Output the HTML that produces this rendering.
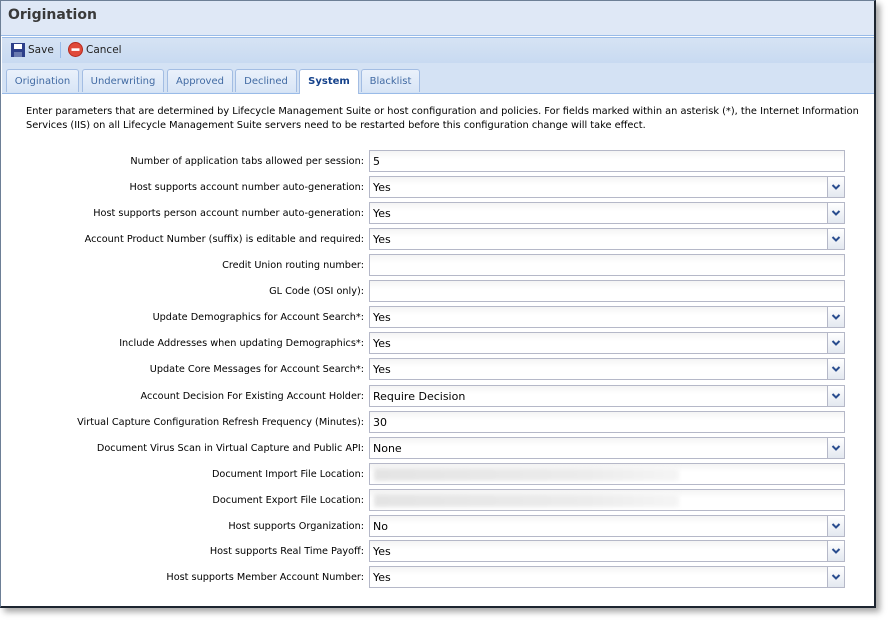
<!DOCTYPE html>
<html><head><style>
body{margin:0;width:890px;height:627px;background:#fff;font-family:"DejaVu Sans","Liberation Sans",sans-serif;position:relative;overflow:hidden}
#win{position:absolute;left:0;top:0;width:873px;height:605px;border:1px solid #6d7f96;border-right:2px solid #1d2530;border-bottom:2px solid #1d2530;background:#fff;box-shadow:4px 4px 6px rgba(0,0,0,.35)}
#title{position:absolute;left:0;top:0;width:873px;height:34px;background:#dfe8f6;border-bottom:1px solid #99bbe8}
#title span{position:absolute;left:7px;top:6px;font:bold 14px "DejaVu Sans",sans-serif;color:#3a3a3a}
#tb{position:absolute;left:1px;top:36px;width:872px;height:25px;background:linear-gradient(#d6e3f4,#c8daf1);border-top:1px solid #99bbe8;font-size:10.5px;color:#222}
#tabs{position:absolute;left:1px;top:62px;width:872px;height:30px;background:#d4e2f4;border-bottom:1px solid #99bbe8}
.tab{position:absolute;top:6px;height:22px;border:1px solid #a3bde3;border-bottom:none;border-radius:3px 3px 0 0;background:linear-gradient(#eaf1fb,#d8e5f6);font-size:10px;color:#416aa3;text-align:center;line-height:23px}
.tab.on{background:#fff;height:24px;color:#15428b;font-weight:bold}
#desc{position:absolute;left:25px;top:104px;width:840px;font-size:9.8px;line-height:14px;color:#000}
.lbl{position:absolute;right:526px;font-size:9.7px;color:#000;white-space:nowrap;margin-top:2px}
.f{position:absolute;left:369px;width:476px;height:22px;border:1px solid #b5b8c8;background:linear-gradient(#f4f4f4,#fff 40%);font-size:11px;line-height:22px;padding-left:3px;box-sizing:border-box}
.dd{position:absolute;right:0;top:0;width:16px;height:20px;border-left:1px solid #b5b8c8;background:linear-gradient(#fff,#e3e8f0)}
.blur{position:absolute;left:4px;top:4px;width:305px;height:13px;background:linear-gradient(90deg,#e4e4e4,#ececec 70%,#f5f5f5);filter:blur(2px)}
</style></head><body>
<div id="win">
<div id="title"><span>Origination</span></div>
<div id="tb">
<svg style="position:absolute;left:9px;top:5px" width="14" height="14"><rect x="0" y="0" width="14" height="14" fill="#2d3f8a"/><rect x="3" y="1" width="8" height="5" fill="#fff"/><rect x="3" y="9" width="8" height="5" fill="#6a7ab0"/></svg>
<span style="position:absolute;left:26px;top:6px">Save</span>
<div style="position:absolute;left:58px;top:4px;width:1px;height:16px;background:#99bbe8"></div>
<svg style="position:absolute;left:66px;top:4px" width="15" height="15"><circle cx="7.5" cy="7.5" r="7" fill="#e04a3a" stroke="#b52a1e"/><rect x="3.5" y="6.3" width="8" height="2.6" fill="#fff"/></svg>
<span style="position:absolute;left:84px;top:6px">Cancel</span>
</div>
<div id="tabs">
<div class="tab" style="left:4px;width:71px">Origination</div>
<div class="tab" style="left:80px;width:80px">Underwriting</div>
<div class="tab" style="left:165px;width:64px">Approved</div>
<div class="tab" style="left:233px;width:60px">Declined</div>
<div class="tab on" style="left:297px;width:58px">System</div>
<div class="tab" style="left:359px;width:57px">Blacklist</div>
</div>
<div id="desc">Enter parameters that are determined by Lifecycle Management Suite or host configuration and policies. For fields marked within an asterisk (*), the Internet Information Services (IIS) on all Lifecycle Management Suite servers need to be restarted before this configuration change will take effect.</div>
</div>
<div class="lbl" style="top:154px">Number of application tabs allowed per session:</div><div class="f" style="top:150px">5</div>
<div class="lbl" style="top:180px">Host supports account number auto-generation:</div><div class="f" style="top:176px">Yes<div class="dd"></div></div>
<div class="lbl" style="top:206px">Host supports person account number auto-generation:</div><div class="f" style="top:202px">Yes<div class="dd"></div></div>
<div class="lbl" style="top:232px">Account Product Number (suffix) is editable and required:</div><div class="f" style="top:228px">Yes<div class="dd"></div></div>
<div class="lbl" style="top:258px">Credit Union routing number:</div><div class="f" style="top:254px"></div>
<div class="lbl" style="top:284px">GL Code (OSI only):</div><div class="f" style="top:280px"></div>
<div class="lbl" style="top:310px">Update Demographics for Account Search*:</div><div class="f" style="top:306px">Yes<div class="dd"></div></div>
<div class="lbl" style="top:336px">Include Addresses when updating Demographics*:</div><div class="f" style="top:332px">Yes<div class="dd"></div></div>
<div class="lbl" style="top:362px">Update Core Messages for Account Search*:</div><div class="f" style="top:358px">Yes<div class="dd"></div></div>
<div class="lbl" style="top:389px">Account Decision For Existing Account Holder:</div><div class="f" style="top:385px">Require Decision<div class="dd"></div></div>
<div class="lbl" style="top:415px">Virtual Capture Configuration Refresh Frequency (Minutes):</div><div class="f" style="top:411px">30</div>
<div class="lbl" style="top:441px">Document Virus Scan in Virtual Capture and Public API:</div><div class="f" style="top:437px">None<div class="dd"></div></div>
<div class="lbl" style="top:467px">Document Import File Location:</div><div class="f" style="top:463px"><div class="blur"></div></div>
<div class="lbl" style="top:493px">Document Export File Location:</div><div class="f" style="top:489px"><div class="blur"></div></div>
<div class="lbl" style="top:519px">Host supports Organization:</div><div class="f" style="top:515px">No<div class="dd"></div></div>
<div class="lbl" style="top:544px">Host supports Real Time Payoff:</div><div class="f" style="top:540px">Yes<div class="dd"></div></div>
<div class="lbl" style="top:570px">Host supports Member Account Number:</div><div class="f" style="top:566px">Yes<div class="dd"></div></div>
<script>
document.querySelectorAll('.dd').forEach(d=>{d.innerHTML='<svg width="16" height="20"><path d="M4.5 8 L8 11.5 L11.5 8" fill="none" stroke="#2a4d8f" stroke-width="2"/></svg>'});
</script>
</body></html>
